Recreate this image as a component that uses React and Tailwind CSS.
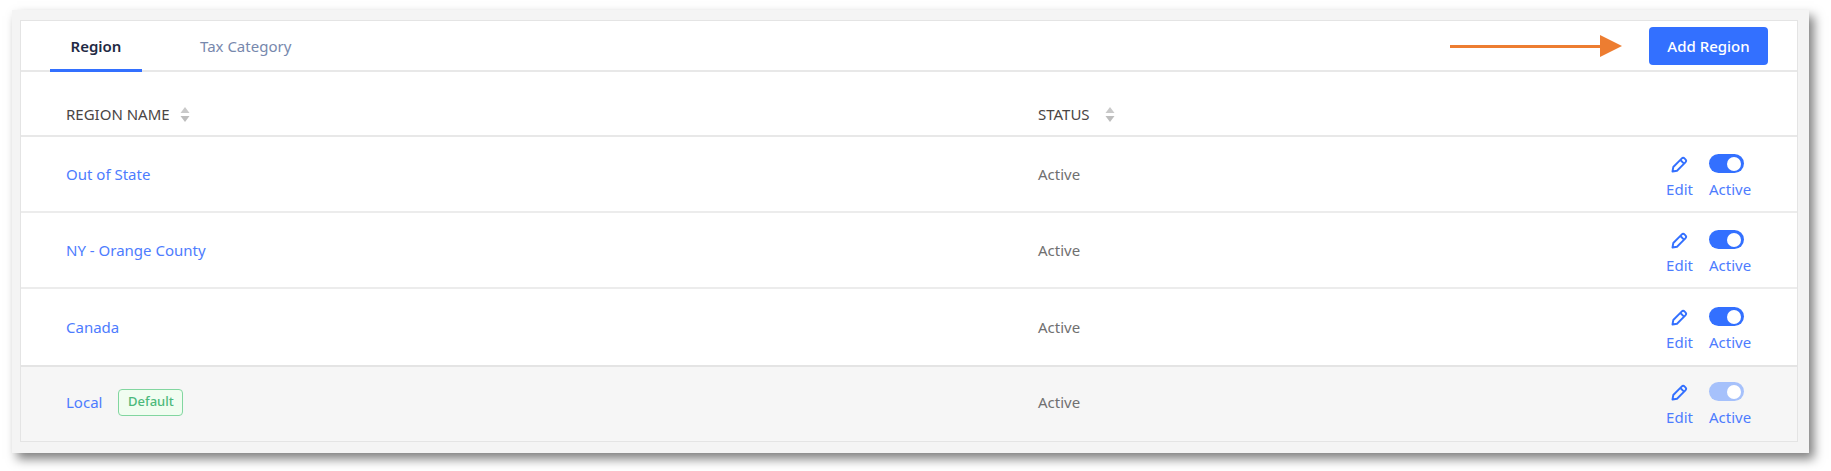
import React from "react";

const regions = [
  { name: "Out of State" },
  { name: "NY - Orange County" },
  { name: "Canada" },
  { name: "Local", isDefault: true },
];

const SortIcon = ({ className }) => (
  <svg width="10" height="15" viewBox="0 0 10 15" className={className}>
    <path d="M5 0 L9.5 6 L0.5 6 Z" fill="#c9c9c9" />
    <path d="M0.5 9 L9.5 9 L5 15 Z" fill="#bdbdbd" />
  </svg>
);

const PencilIcon = () => (
  <svg width="17" height="17" viewBox="0 0 17 17" fill="none" stroke="#3370ff" strokeWidth="1.9" strokeLinejoin="round">
    <path d="M1.5 15.5 L2.3 11 L10.6 2.6 a2.2 2.2 0 0 1 3.1 0 l0.7 0.7 a2.2 2.2 0 0 1 0 3.1 L6 14.7 Z" />
    <path d="M9.4 4 L13 7.6" />
  </svg>
);

const Actions = ({ disabled }) => (
  <div className="flex gap-[15px] text-[#4d7cfe] pr-[44px] mt-[4px]">
    <div className="flex flex-col items-center w-[29px]">
      <div className="h-[22px] flex items-center">
        <PencilIcon />
      </div>
      <span className="mt-[4px] leading-[20px]">Edit</span>
    </div>
    <div className="flex flex-col items-start w-[44px]">
      <div
        className={`h-[19px] w-[35px] rounded-full flex items-center justify-end pr-[3px] mt-[1px] ${
          disabled ? "bg-[#a6c1fb]" : "bg-[#3370ff]"
        }`}
      >
        <div className="h-[14px] w-[14px] rounded-full bg-white" />
      </div>
      <span className="mt-[6px] leading-[20px]">Active</span>
    </div>
  </div>
);

export default function App() {
  return (
    <div className="w-[1831px] h-[471px] bg-white pl-[12px] pt-[10px] font-['Noto_Sans',sans-serif] text-[15px] overflow-hidden">
      <div className="w-[1797px] h-[443px] bg-[#f4f4f4] pl-[8px] pt-[10px] shadow-[5px_6px_10px_rgba(0,0,0,0.5)]">
        <div className="w-[1778px] h-[422px] bg-white border border-[#e4e4e4]">
          {/* tabs */}
          <div className="h-[51px] flex items-start border-b-2 border-[#e8e8e8] pl-[29px]">
            <div className="w-[92px] h-[51px] border-b-[3px] border-[#3370ff] flex justify-center pt-[15px] font-semibold text-[#1f2a44] leading-[20px]">
              Region
            </div>
            <div className="ml-[58px] pt-[15px] text-[#7788ad] leading-[20px]">
              Tax Category
            </div>
            <div className="ml-auto flex items-center mr-[29px] mt-[6px]">
              <div className="flex items-center mr-[27px]">
                <div className="w-[150px] h-[3px] bg-[#ed7d31]" />
                <div className="w-0 h-0 border-y-[11px] border-y-transparent border-l-[22px] border-l-[#ed7d31]" />
              </div>
              <button className="w-[119px] h-[38px] rounded-[4px] bg-[#3370ff] text-white font-medium">
                Add Region
              </button>
            </div>
          </div>

          {/* table head */}
          <div className="h-[65px] flex items-center border-b-2 border-[#e8e8e8] pl-[45px] pt-[22px] text-[#4a4545]">
            <div className="w-[972px] flex items-center">
              REGION NAME
              <SortIcon className="ml-[10px]" />
            </div>
            <div className="flex items-center">
              STATUS
              <SortIcon className="ml-[15px]" />
            </div>
          </div>

          {/* rows */}
          {regions.map((r, i) => (
            <div
              key={r.name}
              className={`h-[76px] flex items-center pl-[45px] ${
                r.isDefault ? "bg-[#f6f6f6] border-t-2 border-[#e4e4e4] pb-[4px]" : ""
              } ${i < 2 ? "border-b-2 border-[#ececec]" : ""}`}
            >
              <div className="w-[972px] flex items-center">
                <span className="text-[#4d7cfe]">{r.name}</span>
                {r.isDefault && (
                  <span className="ml-[16px] h-[27px] w-[65px] justify-center flex items-center rounded-[4px] border border-[#82d6a0] bg-[#f0fdf0] text-[#4cb97b] text-[13px] font-medium">
                    Default
                  </span>
                )}
              </div>
              <div className="text-[#707070]">Active</div>
              <div className="ml-auto">
                <Actions disabled={r.isDefault} />
              </div>
            </div>
          ))}
        </div>
      </div>
    </div>
  );
}
